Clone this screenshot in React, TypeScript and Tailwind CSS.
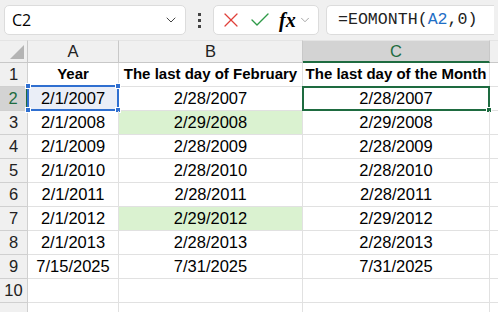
import { ChevronDown, X, Check } from 'lucide-react';

const rows = [
  { a: '2/1/2007', b: '2/28/2007', c: '2/28/2007' },
  { a: '2/1/2008', b: '2/29/2008', c: '2/29/2008', leap: true },
  { a: '2/1/2009', b: '2/28/2009', c: '2/28/2009' },
  { a: '2/1/2010', b: '2/28/2010', c: '2/28/2010' },
  { a: '2/1/2011', b: '2/28/2011', c: '2/28/2011' },
  { a: '2/1/2012', b: '2/29/2012', c: '2/29/2012', leap: true },
  { a: '2/1/2013', b: '2/28/2013', c: '2/28/2013' },
  { a: '7/15/2025', b: '7/31/2025', c: '7/31/2025' },
];

const cell = 'h-[24px] border-r border-b border-[#e1e1e1] flex items-center justify-center';
const rowHead = 'h-[24px] border-r border-b border-[#d0d0d0] bg-[#f0f0f0] flex items-center justify-center text-[16.5px] text-[#222]';

function Handle({ pos }: { pos: string }) {
  return <div className={`absolute w-[6px] h-[6px] bg-[#2f6fd0] border border-white ${pos}`} />;
}

export default function App() {
  return (
    <div className="w-[498px] h-[312px] overflow-hidden bg-white font-['Liberation_Sans',Arial,sans-serif] text-black">
      {/* Formula bar */}
      <div className="h-[40px] bg-[#f0f0f0] flex items-center px-[4px]">
        <div className="w-[182px] h-[30px] bg-white border border-[#dcdcdc] rounded-[5px] flex items-center justify-between pl-[7px] pr-[6px]">
          <span className="text-[16px] font-['Open_Sans',sans-serif]">C2</span>
          <ChevronDown className="w-[16px] h-[16px] text-[#444]" strokeWidth={1.5} />
        </div>
        <div className="w-[27px] flex flex-col items-center gap-[3px]">
          <div className="w-[3px] h-[3px] bg-[#444]" />
          <div className="w-[3px] h-[3px] bg-[#444]" />
          <div className="w-[3px] h-[3px] bg-[#444]" />
        </div>
        <div className="w-[106px] h-[30px] bg-white border border-[#dcdcdc] rounded-[5px] flex items-center pl-[5px] gap-[5px]">
          <X className="w-[24px] h-[24px] text-[#e0403a]" strokeWidth={1.2} />
          <Check className="w-[24px] h-[24px] text-[#2e9a48]" strokeWidth={1.4} />
          <span className="font-['Liberation_Serif',serif] italic text-[20px] leading-none ml-[2px] font-semibold">fx</span>
          <ChevronDown className="w-[14px] h-[14px] text-[#999] -ml-[3px]" strokeWidth={1.5} />
        </div>
        <div className="ml-[7px] flex-1 h-[30px] bg-white border border-[#dcdcdc] rounded-l-[5px] border-r-0 flex items-center pl-[11px] font-['Liberation_Mono',monospace] text-[16.6px] text-[#222]">
          <span>=EOMONTH(</span>
          <span className="text-[#1f6fc6]">A2</span>
          <span>,0)</span>
        </div>
      </div>

      {/* Grid */}
      <div className="grid grid-cols-[28px_91px_184px_187px_1fr]">
        {/* column headers */}
        <div className="h-[23px] border-r border-b border-[#c8c8c8] bg-[#f0f0f0] relative border-t border-t-[#e4e4e4]">
          <div className="absolute right-[3px] bottom-[3px] w-0 h-0 border-l-[14px] border-l-transparent border-b-[14px] border-b-[#b4b4b4]" />
        </div>
        <div className="h-[23px] border-r border-b border-[#c8c8c8] bg-[#f0f0f0] border-t border-t-[#e4e4e4] flex items-center justify-center text-[16.5px] text-[#222]">A</div>
        <div className="h-[23px] border-r border-b border-[#c8c8c8] bg-[#f0f0f0] border-t border-t-[#e4e4e4] flex items-center justify-center text-[16.5px] text-[#222]">B</div>
        <div className="h-[23px] border-r border-[#c8c8c8] border-b-2 border-b-[#1e6b40] bg-[#d3d3d3] border-t border-t-[#e4e4e4] flex items-center justify-center text-[16.5px] text-[#1e6b40]">C</div>
        <div className="h-[23px] border-b border-[#c8c8c8] bg-[#f0f0f0] border-t border-t-[#e4e4e4]" />

        {/* row 1 */}
        <div className={rowHead}>1</div>
        <div className={`${cell} font-bold text-[15px]`}>Year</div>
        <div className={`${cell} font-bold text-[15px] whitespace-nowrap`}>The last day of February</div>
        <div className={`${cell} font-bold text-[15px] whitespace-nowrap`}>The last day of the Month</div>
        <div className="h-[24px] border-b border-[#e1e1e1]" />

        {rows.map((r, i) => {
          const n = i + 2;
          const sel = n === 2;
          return [
            <div
              key={`h${n}`}
              className={
                sel
                  ? 'h-[24px] border-r-2 border-r-[#1e6b40] border-b border-b-[#d0d0d0] bg-[#d3d3d3] flex items-center justify-center text-[16.5px] text-[#1e6b40]'
                  : rowHead
              }
            >
              {n}
            </div>,
            <div key={`a${n}`} className={`${cell} relative text-[16.5px] ${sel ? 'bg-[#eaeef7]' : ''}`}>
              {r.a}
              {sel && (
                <>
                  <div className="absolute -left-[1px] -top-[2px] -right-[1px] -bottom-[1px] border-2 border-[#2f6fd0]" />
                  <Handle pos="-left-[3px] -top-[4px]" />
                  <Handle pos="-right-[3px] -top-[4px]" />
                  <Handle pos="-left-[3px] -bottom-[3px]" />
                  <Handle pos="-right-[3px] -bottom-[3px]" />
                </>
              )}
            </div>,
            <div key={`b${n}`} className={`${cell} text-[16.5px] ${r.leap ? 'bg-[#daf2d0]' : ''}`}>
              {r.b}
            </div>,
            <div key={`c${n}`} className={`${cell} relative text-[16.5px]`}>
              {r.c}
              {sel && (
                <>
                  <div className="absolute -left-[1px] -top-[1px] -right-[1px] -bottom-[1px] border-2 border-[#1e6b40]" />
                  <div className="absolute -right-[3px] -bottom-[3px] w-[6px] h-[6px] bg-[#1e6b40] border border-white" />
                </>
              )}
            </div>,
            <div key={`d${n}`} className="h-[24px] border-b border-[#e1e1e1]" />,
          ];
        })}

        {/* empty row */}
        <div className={rowHead}>10</div>
        <div className={cell} />
        <div className={cell} />
        <div className={cell} />
        <div className="h-[24px] border-b border-[#e1e1e1]" />
        <div className="h-[24px] border-r border-[#d0d0d0] bg-[#f0f0f0]" />
        <div className="h-[24px] border-r border-[#e1e1e1]" />
        <div className="h-[24px] border-r border-[#e1e1e1]" />
        <div className="h-[24px] border-r border-[#e1e1e1]" />
        <div className="h-[24px]" />
      </div>
    </div>
  );
}
